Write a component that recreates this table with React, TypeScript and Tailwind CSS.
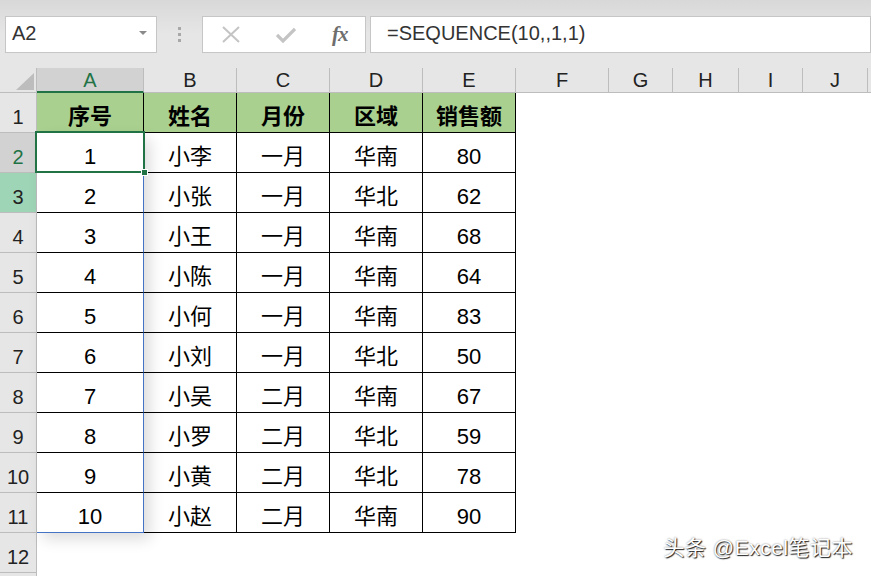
import React from 'react';

const cols = ['A', 'B', 'C', 'D', 'E', 'F', 'G', 'H', 'I', 'J'];
const head = ['序号', '姓名', '月份', '区域', '销售额'];
const data: (string | number)[][] = [
  [1, '小李', '一月', '华南', 80],
  [2, '小张', '一月', '华北', 62],
  [3, '小王', '一月', '华南', 68],
  [4, '小陈', '一月', '华南', 64],
  [5, '小何', '一月', '华南', 83],
  [6, '小刘', '一月', '华北', 50],
  [7, '小吴', '二月', '华南', 67],
  [8, '小罗', '二月', '华北', 59],
  [9, '小黄', '二月', '华北', 78],
  [10, '小赵', '二月', '华南', 90],
];

const font = 'font-["Liberation_Sans","Noto_Sans_CJK_SC",sans-serif]';

function RowHeader({ n }: { n: number | null }) {
  let cls = 'bg-[#e6e6e6] text-[#222]';
  if (n === 2) cls = 'bg-[#d2d2d2] text-[#217346]';
  if (n === 3) cls = 'bg-[#9fd5b7] text-[#222]';
  return (
    <div className={`flex items-center justify-center pt-[8px] border-r border-b border-[#bdbdbd] text-[20px] ${cls}`}>
      {n}
    </div>
  );
}

function Empty() {
  return <div className="bg-white" />;
}

export default function App() {
  return (
    <div className={`w-[871px] h-[576px] overflow-hidden bg-white ${font}`}>
      {/* formula bar */}
      <div className="h-[68px] bg-gradient-to-b from-[#d8d8d8] via-[#e6e6e6] to-[#e6e6e6] pt-[16px] flex items-start">
        <div className="ml-[5px] w-[152px] h-[37px] bg-white border border-[#c6c6c6] flex items-center justify-between pl-[6px] pr-[9px] pb-[3px]">
          <span className="text-[20px] text-[#333]">A2</span>
          <svg width="8" height="5" viewBox="0 0 8 5">
            <path d="M0 0 L8 0 L4 4 Z" fill="#8a8a8a" />
          </svg>
        </div>
        <div className="w-[45px] h-[37px] flex flex-col items-center justify-center gap-[3px]">
          <span className="w-[3px] h-[3px] bg-[#a8a8a8]" />
          <span className="w-[3px] h-[3px] bg-[#a8a8a8]" />
          <span className="w-[3px] h-[3px] bg-[#a8a8a8]" />
        </div>
        <div className="w-[164px] h-[37px] bg-white border border-[#c6c6c6] flex items-center">
          <svg className="ml-[19px]" width="18" height="17" viewBox="0 0 18 17">
            <path d="M1 1 L17 16 M17 1 L1 16" stroke="#c4c4c4" strokeWidth="2" />
          </svg>
          <svg className="ml-[36px]" width="20" height="16" viewBox="0 0 20 16">
            <path d="M1 8 L7 14 L19 2" stroke="#c4c4c4" strokeWidth="3.2" fill="none" />
          </svg>
          <span className="ml-[36px] text-[21px] italic font-bold text-[#6e6e6e] font-['Liberation_Serif',serif] tracking-[-1px]">
            fx
          </span>
        </div>
        <div className="ml-[4px] flex-1 h-[37px] bg-white border border-[#c6c6c6] flex items-center pl-[16px] pb-[3px]">
          <span className="text-[20px] text-[#333]">=SEQUENCE(10,,1,1)</span>
        </div>
      </div>

      {/* grid */}
      <div className="relative grid grid-cols-[37px_107px_93px_93px_93px_93px_93px_64px_66px_64px_65px_1fr] grid-rows-[25px_repeat(12,40px)_40px]">
        {/* column header */}
        <div className="relative bg-[#e6e6e6] border-r border-b border-[#bdbdbd]">
          <svg className="absolute left-[16px] top-[5px]" width="18" height="17" viewBox="0 0 18 17">
            <path d="M18 0 L18 17 L0 17 Z" fill="#bdbdbd" />
          </svg>
        </div>
        {cols.map((c) =>
          c === 'A' ? (
            <div
              key={c}
              className="flex items-center justify-center bg-[#d2d2d2] text-[#217346] text-[20px] border-r border-[#bdbdbd] border-b-2 border-b-[#217346]"
            >
              {c}
            </div>
          ) : (
            <div
              key={c}
              className="flex items-center justify-center bg-[#e6e6e6] text-[#222] text-[20px] border-r border-b border-[#bdbdbd]"
            >
              {c}
            </div>
          )
        )}
        <div className="bg-[#e6e6e6] border-b border-[#bdbdbd]" />

        {/* row 1 */}
        <RowHeader n={1} />
        {head.map((h) => (
          <div
            key={h}
            className="flex items-center justify-center pt-[8px] bg-[#a9d08e] border-r border-b border-black text-[22px] font-bold text-black"
          >
            {h}
          </div>
        ))}
        {[0, 1, 2, 3, 4, 5].map((i) => (
          <Empty key={i} />
        ))}

        {/* data rows */}
        {data.map((r, ri) => (
          <React.Fragment key={ri}>
            <RowHeader n={ri + 2} />
            {r.map((v, ci) => (
              <div
                key={ci}
                className={`flex items-center justify-center pt-[8px] bg-white text-[22px] text-black border-b border-r ${
                  ci === 0
                    ? ri === 9
                      ? 'border-[#4472c4]'
                      : 'border-b-black border-r-[#4472c4]'
                    : 'border-black'
                }`}
              >
                {v}
              </div>
            ))}
            {[0, 1, 2, 3, 4, 5].map((i) => (
              <Empty key={i} />
            ))}
          </React.Fragment>
        ))}

        {/* rows 12, 13 */}
        {[12, null].map((n, k) => (
          <React.Fragment key={k}>
            <RowHeader n={n} />
            {[0, 1, 2, 3, 4, 5, 6, 7, 8, 9, 10].map((i) => (
              <Empty key={i} />
            ))}
          </React.Fragment>
        ))}

        {/* spill range shadow */}
        <div className="absolute left-[37px] top-[65px] w-[107px] h-[400px] pointer-events-none shadow-[6px_6px_14px_rgba(0,0,0,0.14)]" />
        {/* active cell */}
        <div className="absolute left-[35px] top-[63px] w-[110px] h-[42px] border-2 border-[#217346] pointer-events-none">
          <div className="absolute right-[-5px] bottom-[-5px] w-[7px] h-[7px] bg-[#217346] border border-white" />
        </div>

        {/* watermark */}
        <div className="absolute right-[18px] top-[464px] text-[21px] tracking-[0.5px] text-white [text-shadow:1px_1px_1px_rgba(0,0,0,0.85),0_0_2px_rgba(0,0,0,0.5)]">
          头条 @Excel笔记本
        </div>
      </div>
    </div>
  );
}
